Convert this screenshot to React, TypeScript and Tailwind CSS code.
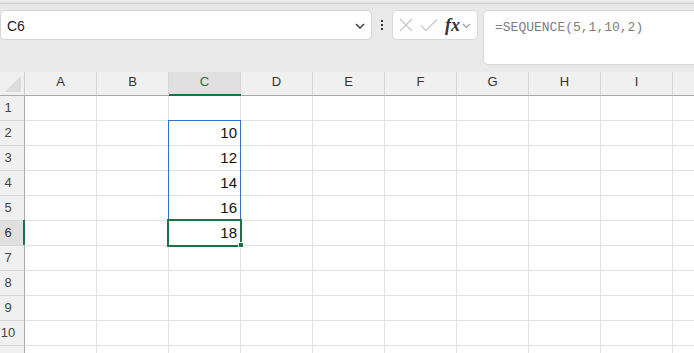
import React from "react";

const COLS = ["A", "B", "C", "D", "E", "F", "G", "H", "I", "J"];
const ROWS = [1, 2, 3, 4, 5, 6, 7, 8, 9, 10, 11];
const VALUES: Record<string, string> = { C2: "10", C3: "12", C4: "14", C5: "16", C6: "18" };

export default function App() {
  return (
    <div
      className="relative w-[694px] h-[353px] overflow-hidden bg-[#e9e9e9]"
      style={{ fontFamily: '"Liberation Sans", Arial, sans-serif' }}
    >
      {/* top strip */}
      <div className="h-[4px] bg-gradient-to-b from-[#f3f3f3] to-[#dedede] border-b border-[#d2d2d2]" />
      {/* toolbar */}
      <div className="flex items-start h-[68px] pt-[6px]">
        <div className="shrink-0 flex items-center w-[372px] h-[30px] bg-white border border-[#d4d4d4] rounded-[5px] pl-[6px] pr-[5px]">
          <span className="text-[14px] text-[#222] mt-[2px] flex-1">C6</span>
          <svg width="10" height="6" viewBox="0 0 10 6" className="mt-[1px] mr-[1px]">
            <path d="M1 1 L5 5 L9 1" fill="none" stroke="#333" strokeWidth="1.3" />
          </svg>
        </div>
        <div className="shrink-0 flex flex-col items-center justify-center gap-[2px] w-[20px] h-[30px]">
          <div className="w-[2px] h-[2px] bg-[#333]" />
          <div className="w-[2px] h-[2px] bg-[#333]" />
          <div className="w-[2px] h-[2px] bg-[#333]" />
        </div>
        <div className="shrink-0 flex items-center w-[86px] h-[30px] bg-white border border-[#d8d8d8] rounded-[5px] pl-[5px]">
          <svg width="14" height="14" viewBox="0 0 14 14" className="ml-[1px]">
            <path d="M1 1 L13 13 M13 1 L1 13" stroke="#c4c4c4" strokeWidth="1.1" fill="none" />
          </svg>
          <svg width="18" height="14" viewBox="0 0 18 14" className="ml-[7px]">
            <path d="M1 7.5 L6 12.5 L17 1.5" stroke="#c4c4c4" strokeWidth="1.1" fill="none" />
          </svg>
          <span
            className="ml-[7px] text-[18px] italic font-semibold text-[#333] leading-none"
            style={{ fontFamily: '"Liberation Serif", "Times New Roman", serif' }}
          >
            fx
          </span>
          <svg width="9" height="6" viewBox="0 0 9 6" className="ml-[2px] mt-[2px]">
            <path d="M1 1 L4.5 4.5 L8 1" fill="none" stroke="#999" strokeWidth="1.1" />
          </svg>
        </div>
        <div className="shrink-0 ml-[5px] w-[230px] h-[55px] bg-white border border-[#d8d8d8] rounded-[5px] pl-[11px] pt-[3px]">
          <span
            className="text-[13px] text-[#7d7d7d] leading-[18px]"
            style={{ fontFamily: '"Liberation Mono", "DejaVu Sans Mono", monospace' }}
          >
            =SEQUENCE(5,1,10,2)
          </span>
        </div>
      </div>

      {/* grid */}
      <div className="relative">
        {/* column header */}
        <div className="flex h-[24px] border-b border-[#a9a9a9] bg-[#f0f0f0]">
          <div className="relative w-[25px] shrink-0 border-r border-[#d0d0d0]">
            <div
              className="absolute left-[5px] top-[4px] w-[16px] h-[16px] bg-[#dcdcdc]"
              style={{ clipPath: "polygon(100% 0, 100% 100%, 0 100%)" }}
            />
          </div>
          {COLS.map((c) => {
            const sel = c === "C";
            return (
              <div
                key={c}
                className={
                  "relative w-[72px] shrink-0 border-r border-[#d6d6d6] text-center text-[13px] leading-[16px] pt-[2px] " +
                  (sel ? "bg-[#e0e0e0] text-[#1e7145]" : "text-[#333]")
                }
              >
                {c}
                {sel && <div className="absolute left-0 right-[-1px] bottom-[-1px] h-[2px] bg-[#1e7145]" />}
              </div>
            );
          })}
        </div>
        {ROWS.map((r) => {
          const selRow = r === 6;
          return (
            <div key={r} className="flex h-[25px]">
              <div
                className={
                  "relative w-[25px] shrink-0 border-r border-b text-[13px] flex items-center " +
                  (selRow
                    ? "bg-[#e0e0e0] border-r-[#a9a9a9] border-b-[#d6d6d6] text-[#333]"
                    : "bg-[#f0f0f0] border-r-[#a9a9a9] border-b-[#d6d6d6] text-[#444]")
                }
              >
                <span className="w-[16px] text-center">{r}</span>
                {selRow && <div className="absolute right-[-1px] top-[-1px] bottom-0 w-[2px] bg-[#1e7145]" />}
              </div>
              {COLS.map((c) => (
                <div
                  key={c}
                  className="w-[72px] shrink-0 border-r border-b border-[#e1e1e1] bg-white flex items-center justify-end pr-[3px] text-[15px] text-[#111]"
                  style={{ fontFamily: '"Liberation Sans Narrow", "Liberation Sans", Arial, sans-serif' }}
                >
                  {VALUES[c + r] ?? ""}
                </div>
              ))}
            </div>
          );
        })}

        {/* spill range (blue) */}
        <div className="absolute left-[168px] top-[48px] w-[73px] h-[101px] border border-[#3a6fd0] pointer-events-none" />
        {/* active cell (green) */}
        <div className="absolute left-[167px] top-[147px] w-[75px] h-[28px] border-2 border-[#1e7145] pointer-events-none" />
        {/* fill handle */}
        <div className="absolute left-[238px] top-[170px] w-[6px] h-[6px] bg-[#1e7145] border border-white" />
      </div>
    </div>
  );
}
